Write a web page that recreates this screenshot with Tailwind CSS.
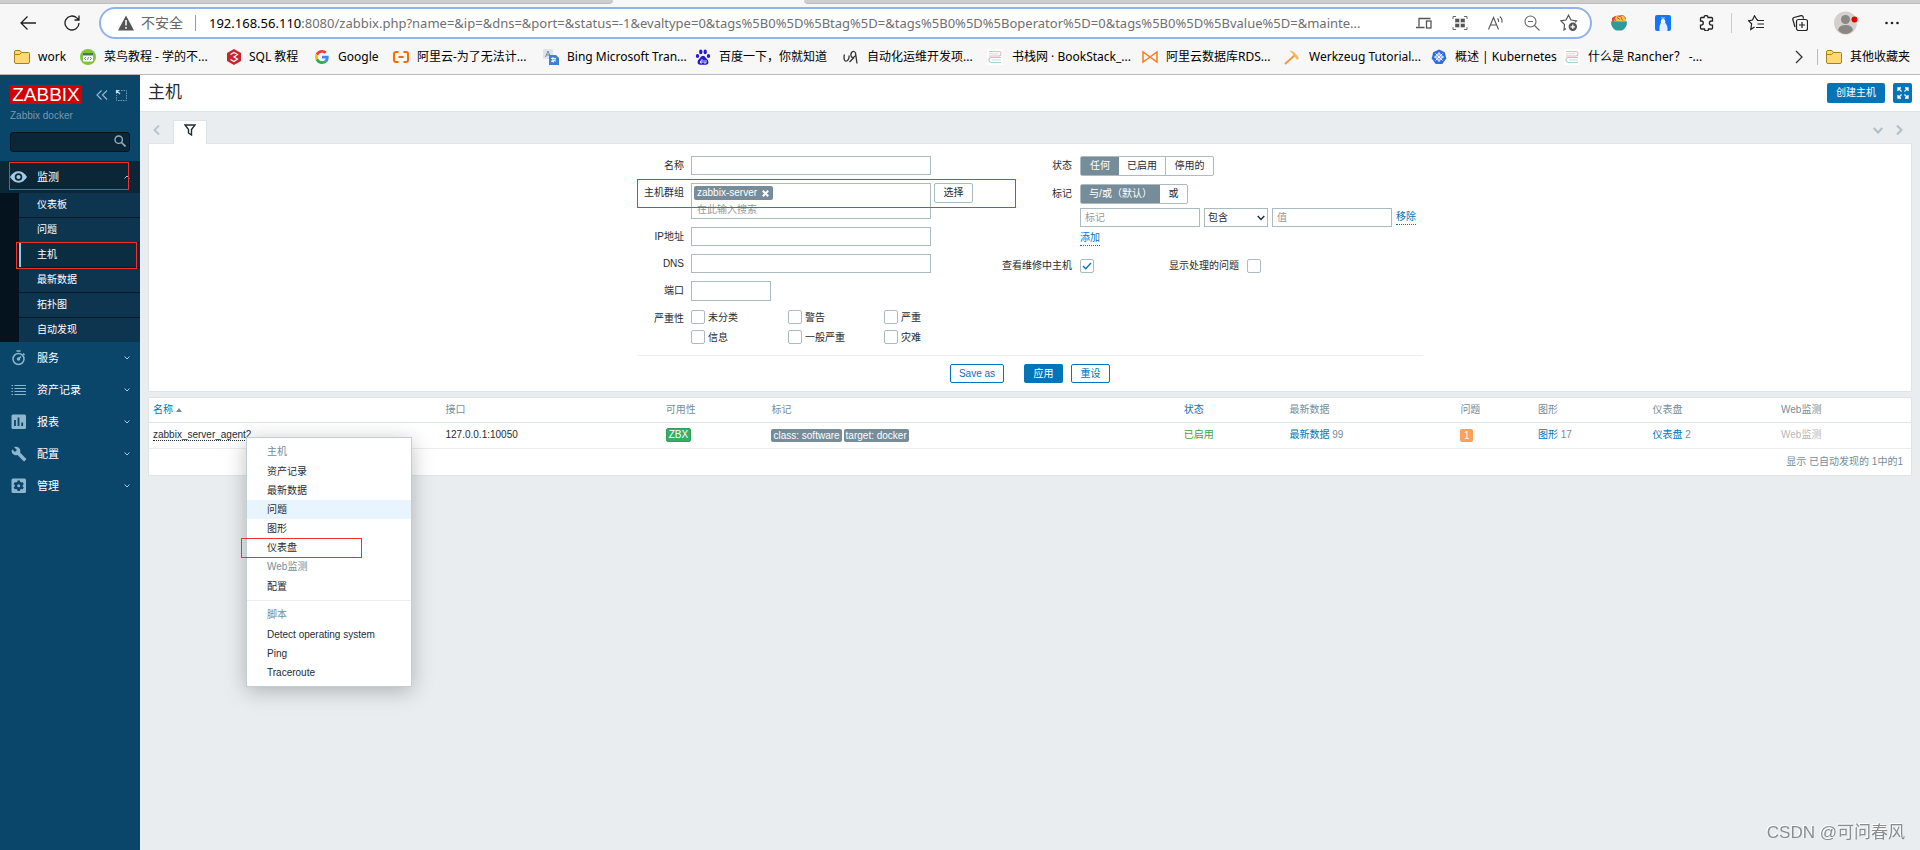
<!DOCTYPE html>
<html lang="zh-CN">
<head>
<meta charset="utf-8">
<title>主机</title>
<script src="https://cdn.jsdelivr.net/npm/@tailwindcss/browser@4"></script>
</head>
<body class="min-h-screen flex flex-col bg-[#e9edf0] text-[#1f2c33] font-['Liberation_Sans','Noto_Sans_CJK_SC',sans-serif] text-[10px] leading-[14px]">

<!-- Browser chrome -->
<header class="bg-[#f7f7f7] border-b border-[#b8b8b8] font-['Noto_Sans','Noto_Sans_CJK_SC',sans-serif] text-black">
  <div class="flex h-1">
    <div class="w-[613px] bg-[#cdcdcd] border-b border-[#bdbdbd] rounded-br"></div>
    <div class="w-[191px]"></div>
    <div class="flex-1 bg-[#cdcdcd] border-b border-[#bdbdbd] rounded-bl"></div>
  </div>
  <div class="flex items-center h-[38px] px-5">
    <button aria-label="返回" class="w-4 h-4"><svg viewBox="0 0 16 16" class="w-4 h-4" fill="none" stroke="#222" stroke-width="1.3"><path d="M16 8H1M7.500 1.500L1 8l6.500 6.500"/></svg></button>
    <button aria-label="刷新" class="w-4 h-4 ml-7"><svg viewBox="0 0 16 16" class="w-4 h-4" fill="none" stroke="#222" stroke-width="1.3"><path d="M15 8a7 7 0 1 1-2.200-5.100L15 5M15 .5V5h-4.500"/></svg></button>
    <div class="ml-[19px] flex-1 h-8 flex items-center rounded-full border-2 border-[#8fb3ec] bg-white pl-[17px] pr-3">
      <svg viewBox="0 0 16 16" class="w-4 h-4" fill="#555"><path d="M8 .5L16 15.500H0z"/><path d="M8 5v5.500M8 12v1.700" stroke="#fff" stroke-width="1.500"/></svg>
      <span class="ml-[7px] text-sm text-[#666] whitespace-nowrap">不安全</span>
      <span class="ml-3 w-px h-4 bg-[#999]"></span>
      <span class="ml-[13px] text-[13px] whitespace-nowrap text-[#707070]"><span class="text-black">192.168.56.110</span>:8080/zabbix.php?name=&amp;ip=&amp;dns=&amp;port=&amp;status=-1&amp;evaltype=0&amp;tags%5B0%5D%5Btag%5D=&amp;tags%5B0%5D%5Boperator%5D=0&amp;tags%5B0%5D%5Bvalue%5D=&amp;mainte...</span>
      <div class="ml-auto flex items-center gap-5 shrink-0">
        <svg viewBox="0 0 16 16" class="w-4 h-4" fill="none" stroke="#555" stroke-width="1.300"><path d="M14.500 3.500H3v8M0 12.500h8.500"/><rect x="10.500" y="6" width="4.500" height="7"/></svg>
        <svg viewBox="0 0 16 16" class="w-4 h-4" fill="none" stroke="#666"><path d="M1 4V1.500h3M12 1.500h3V4M1 12v2.500h3M12 14.500h3V12"/><path d="M3 3.500h4.500v4H3zM8.500 3.500H13v4H8.500zM3 8.500h4.500v4H3zM8.500 8.500H13v4H8.500z" fill="#555" stroke="#fff" stroke-width=".4"/></svg>
        <svg viewBox="0 0 16 16" class="w-4 h-4" fill="none" stroke="#555" stroke-width="1.100"><path d="M.5 14.500L5.500 2.500l5 12M2.500 10h6M9.500 3.500q1.500 1.500 1 3.500M11.800 1.500q3 2.500 2 6"/></svg>
        <svg viewBox="0 0 16 16" class="w-4 h-4" fill="none" stroke="#666" stroke-width="1.100"><circle cx="6.500" cy="6.500" r="5.500"/><path d="M10.500 10.500L15.500 15.500M4 6.500h5"/></svg>
        <svg viewBox="0 0 18 18" class="w-[18px] h-[18px]" fill="none" stroke="#555" stroke-width="1.200"><path d="M6 14.500l-2 1.500 .5-5.500L.8 6.800 6 6 8.500 1.200 11 6l5.500 .8-1.500 1.500"/><circle cx="12.800" cy="12.800" r="4.200" fill="#555" stroke="none"/><path d="M12.800 10.500v4.600M10.500 12.800h4.600" stroke="#fff"/></svg>
      </div>
    </div>
    <svg viewBox="0 0 16 16" class="ml-[19px] w-4 h-4"><path d="M1 7l0-4 3-2 8-1 3 3v4z" fill="#e0483c"/><path d="M3 6L5 1l4 1 3-1.500 3 4V7H4z" fill="#f7c843"/><path d="M6 2.500l3 2M10 2l1.500 3.500M3 3l2 3" stroke="#e0483c"/><path d="M0 6.500h16q0 6.500-5 9H5Q0 13 0 6.500z" fill="#2e9b98"/></svg>
    <svg viewBox="0 0 16 16" class="ml-7 w-4 h-4"><rect width="16" height="16" rx="2" fill="#1277ff"/><path d="M4.500 16Q4 10 6.300 7h3.200Q13 10 12.500 16z" fill="#e2efff"/><circle cx="8" cy="6.300" r="2.200" fill="#fff"/><path d="M6.500 2l1.500 1L9.500 2v1.500h-3z" fill="#fff"/></svg>
    <svg viewBox="0 0 16 16" class="ml-7 w-4 h-4" fill="none" stroke="#222" stroke-width="1.300"><path d="M2.500 2.500H5a2 2 0 0 1 4 0h3.500q1 0 1 1V6H12.500a2.100 2.100 0 0 0 0 4.200h1V13q0 1-1 1H9.500a2 2 0 0 1-4 0h-3q-1 0-1-1v-2.800h.7a2.100 2.100 0 0 0 0-4.200h-.7V3.500q0-1 1-1z"/></svg>
    <span class="ml-4 w-px h-5 bg-[#ccc]"></span>
    <svg viewBox="0 0 16 16" class="ml-4 w-4 h-4" fill="none" stroke="#222" stroke-width="1.200"><path d="M10 4.800L8.800 4.500 6.500.8 4.500 5 .6 5.800l3 3L2.800 14.500 6.500 12M9 5.500h7M9.500 9h6.500M8 12.500h8"/></svg>
    <svg viewBox="0 0 16 16" class="ml-7 w-4 h-4" fill="none" stroke="#222" stroke-width="1.200"><path d="M3 12L.8 4.500Q.5 3 2 2.500L9 .6q1.500-.2 2 1l.5 2"/><rect x="4.500" y="4.500" width="11" height="11" rx="2"/><path d="M10 7v6M7 10h6"/></svg>
    <svg viewBox="0 0 24 24" class="ml-[26px] w-6 h-6"><circle cx="11.500" cy="12" r="11.500" fill="#d3d0cd"/><circle cx="11.500" cy="8.500" r="4.500" fill="#8b8784"/><path d="M4 19q1-5 7.500-5t7.500 5q-3 4-7.500 4T4 19z" fill="#8b8784"/><circle cx="20.500" cy="8.500" r="3" fill="#e60000"/></svg>
    <button aria-label="更多" class="ml-[26px] w-4 h-4"><svg viewBox="0 0 16 16" class="w-4 h-4" fill="#222"><circle cx="2.500" cy="8" r="1.300"/><circle cx="8" cy="8" r="1.300"/><circle cx="13.500" cy="8" r="1.300"/></svg></button>
  </div>
  <nav class="flex items-center h-8 pb-[3px] pl-[14px] pr-[10px] text-xs whitespace-nowrap">
    <a href="#" class="flex items-center gap-2 w-[66px] shrink-0"><svg viewBox="0 0 16 16" class="w-4 h-4 shrink-0"><path d="M.5 3Q.5 1.500 2 1.500h4l1.500 2h7q1 0 1 1V13q0 1.500-1.500 1.500H2Q.5 14.500.5 13z" fill="#ffd976" stroke="#a8811f"/><path d="M.5 5.500h5l2-2" fill="none" stroke="#a8811f"/></svg>work</a>
    <a href="#" class="flex items-center gap-2 w-[146px] shrink-0"><svg viewBox="0 0 16 16" class="w-4 h-4 shrink-0"><circle cx="8" cy="8" r="8" fill="#84c341"/><rect x="3" y="4" width="10" height="8.500" rx="1" fill="#fff"/><path d="M3 4h10v2.500H3z" fill="#476"/><path d="M6 8L4.500 9.500 6 11M10 8l1.500 1.500L10 11M8.500 8l-1 3" fill="none" stroke="#476" stroke-width=".8"/></svg>菜鸟教程 - 学的不...</a>
    <a href="#" class="flex items-center gap-[7px] w-[89px] shrink-0"><svg viewBox="0 0 16 16" class="w-4 h-4 shrink-0"><path d="M8 0l7 4v8l-7 4-7-4V4z" fill="#c8252f"/><path d="M4.500 5.500L8 3.500l3.500 2L8 8l3.500 2L8 12.500 4.500 10.500" fill="none" stroke="#fff" stroke-width="1.200"/></svg>SQL 教程</a>
    <a href="#" class="flex items-center gap-[9px] w-[78px] shrink-0"><svg viewBox="0 0 48 48" class="w-[14px] h-[14px] shrink-0"><path fill="#ea4335" d="M24 9.500c3.540 0 6.710 1.220 9.210 3.600l6.850-6.850C35.900 2.380 30.470 0 24 0 14.620 0 6.510 5.380 2.560 13.220l7.980 6.190C12.430 13.720 17.740 9.500 24 9.500z"/><path fill="#4285f4" d="M46.980 24.550c0-1.570-.15-3.090-.38-4.550H24v9.020h12.940c-.58 2.960-2.260 5.480-4.780 7.180l7.730 6c4.510-4.180 7.090-10.360 7.090-17.650z"/><path fill="#fbbc05" d="M10.530 28.590c-.48-1.450-.76-2.990-.76-4.590s.27-3.140.76-4.590l-7.980-6.190C.92 16.460 0 20.120 0 24s.92 7.540 2.560 10.780z"/><path fill="#34a853" d="M24 48c6.480 0 11.930-2.130 15.890-5.810l-7.730-6c-2.150 1.450-4.920 2.300-8.160 2.300-6.260 0-11.570-4.220-13.470-9.910l-7.980 6.190C6.510 42.620 14.620 48 24 48z"/></svg>Google</a>
    <a href="#" class="flex items-center gap-2 w-[150px] shrink-0"><svg viewBox="0 0 16 16" class="w-4 h-4 shrink-0" fill="none" stroke="#ff6a00" stroke-width="2"><path d="M5.500 3H3Q1 3 1 5v6q0 2 2 2h2.500M10.500 3H13q2 0 2 2v6q0 2-2 2h-2.500M5.500 8h5"/></svg>阿里云-为了无法计...</a>
    <a href="#" class="flex items-center gap-2 w-[152px] shrink-0"><svg viewBox="0 0 16 16" class="w-4 h-4 shrink-0"><rect width="10" height="10" rx="1" fill="#dce3ea"/><path d="M2.500 8L5 2l2.500 6M3.500 6h3" fill="none" stroke="#6f8aa5"/><path d="M6 6h7l3 3v7H6z" fill="#3f7fd4"/><path d="M8 9.500h5M10 8q-.5 4 .5 5.500M12.500 10q-3 4-4 2.500T13 12" fill="none" stroke="#fff" stroke-width=".9"/></svg>Bing Microsoft Tran...</a>
    <a href="#" class="flex items-center gap-2 w-[148px] shrink-0"><svg viewBox="0 0 16 16" class="w-4 h-4 shrink-0" fill="#2319dc"><ellipse cx="2.500" cy="7" rx="1.700" ry="2.100"/><ellipse cx="5.800" cy="2.900" rx="1.700" ry="2.300"/><ellipse cx="10.200" cy="2.900" rx="1.700" ry="2.300"/><ellipse cx="13.500" cy="7" rx="1.700" ry="2.100"/><path d="M8 6.700q1.500 0 3 2.300l2 2.200q1.500 4-2 4.500H5Q1.500 15.200 3 11.200L5 9Q6.500 6.700 8 6.700z"/><path d="M7 10v4H5.500v-2H7M9 11v3h2v-3" fill="none" stroke="#fff" stroke-width=".8"/></svg>百度一下，你就知道</a>
    <a href="#" class="flex items-center gap-2 w-[144px] shrink-0"><svg viewBox="0 0 16 16" class="w-4 h-4 shrink-0" fill="none" stroke="#333" stroke-width="1.300"><path d="M1.500 5.500q-1 3 0 5.500 1 2 3 .5 2-2 1.500-5M12.500 6.500q-2 3-4 1.500-1.500-2.500.5-5 2.500-1.500 3.500 1l1.500 10.500M11 8.500L6.500 13"/></svg>自动化运维开发项...</a>
    <a href="#" class="flex items-center gap-[9px] w-[155px] shrink-0"><svg viewBox="0 0 16 16" class="w-4 h-4 shrink-0" fill="none" stroke-width="1.200"><rect width="16" height="16" fill="#fff"/><path d="M2 2.500h10q2 0 2 2t-2 2.500H2" stroke="#f0b4bb"/><path d="M2 4.800h9" stroke="#f0b4bb" stroke-width=".7"/><path d="M14 8.500H4q-2 0-2 2.300T4 13.500h10" stroke="#a9cfcd"/><path d="M5 11h9" stroke="#a9cfcd" stroke-width=".7"/></svg>书栈网 · BookStack_...</a>
    <a href="#" class="flex items-center gap-2 w-[142px] shrink-0"><svg viewBox="0 0 16 16" class="w-4 h-4 shrink-0" fill="none" stroke="#ff7a1a" stroke-width="1.500"><path d="M1 3v10l7-5 7-5v10L8 8z"/></svg>阿里云数据库RDS...</a>
    <a href="#" class="flex items-center gap-[9px] w-[147px] shrink-0"><svg viewBox="0 0 16 16" class="w-4 h-4 shrink-0" fill="none"><path d="M1 15L11 6" stroke="#ee9b3a" stroke-width="2"/><path d="M5 1.500q4 0 6 2.500l4 5-2 2-3-4.500Q8 3.500 5 1.500z" fill="#f8b75a"/></svg>Werkzeug Tutorial...</a>
    <a href="#" class="flex items-center gap-2 w-[133px] shrink-0"><svg viewBox="0 0 16 16" class="w-4 h-4 shrink-0"><path d="M8 .5l5.800 2.800 1.500 6.200-4 5.500H4.700l-4-5.500 1.500-6.200z" fill="#326ce5"/><g fill="none" stroke="#fff" stroke-width=".9"><circle cx="8" cy="8" r="3.300"/><path d="M8 3v10M3 8h10M4.500 4.500l7 7M11.500 4.500l-7 7"/></g></svg>概述 | Kubernetes</a>
    <a href="#" class="flex items-center gap-2 shrink-0"><svg viewBox="0 0 16 16" class="w-4 h-4 shrink-0" fill="none" stroke-width="1.200"><rect width="16" height="16" fill="#fff"/><path d="M2 2.500h10q2 0 2 2t-2 2.500H2" stroke="#f0b4bb"/><path d="M2 4.800h9" stroke="#f0b4bb" stroke-width=".7"/><path d="M14 8.500H4q-2 0-2 2.300T4 13.500h10" stroke="#a9cfcd"/><path d="M5 11h9" stroke="#a9cfcd" stroke-width=".7"/></svg>什么是 Rancher？ -...</a>
    <svg viewBox="0 0 8 14" class="ml-auto w-2 h-[14px] shrink-0" fill="none" stroke="#333" stroke-width="1.300"><path d="M1 1l6 6-6 6"/></svg>
    <span class="ml-[14px] w-px h-4 bg-[#bbb] shrink-0"></span>
    <a href="#" class="ml-2 flex items-center gap-2 shrink-0"><svg viewBox="0 0 16 16" class="w-4 h-4 shrink-0"><path d="M.5 3Q.5 1.500 2 1.500h4l1.500 2h7q1 0 1 1V13q0 1.500-1.500 1.500H2Q.5 14.500.5 13z" fill="#ffd976" stroke="#a8811f"/><path d="M.5 5.500h5l2-2" fill="none" stroke="#a8811f"/></svg>其他收藏夹</a>
  </nav>
</header>

<div class="flex flex-1">
  <!-- Sidebar -->
  <aside class="w-[140px] shrink-0 bg-[#0a466a] text-white">
    <div class="px-[10px] pt-[10px]">
      <div class="flex items-center">
        <a href="#" class="bg-[#d40000] w-[72px] h-[19px] text-[19px] leading-[19px] text-center">ZABBIX</a>
        <button aria-label="收起" class="ml-[14px]"><svg viewBox="0 0 12 10" class="w-3 h-[10px]" fill="none" stroke="#8fb6cf" stroke-width="1.200"><path d="M5.500 .5L1 5l4.500 4.500M11 .5L6.500 5 11 9.500"/></svg></button>
        <button aria-label="隐藏" class="ml-[7px]"><svg viewBox="0 0 12 12" class="w-3 h-3" fill="none" stroke="#6f9ab5"><path d="M6 1.500h5.500v10h-10V6" stroke-dasharray="1.500 1"/><path d="M1.500 4.500v-3h3M1.500 1.500L5 5" stroke="#c5deec" stroke-width="1.200"/></svg></button>
      </div>
      <div class="mt-[5px] text-[#7698ae]">Zabbix docker</div>
      <div class="relative mt-[9px]">
        <input aria-label="搜索" type="text" class="block w-full h-5 rounded-[3px] border border-[#031722] bg-[#0a2637] px-2">
        <svg viewBox="0 0 12 12" class="absolute right-1 top-[3px] w-3 h-3" fill="none" stroke="#8fb0c4" stroke-width="1.400"><circle cx="4.700" cy="4.700" r="3.700"/><path d="M7.500 7.500l4 4" stroke-width="1.700"/></svg>
      </div>
    </div>
    <nav class="mt-[9px] text-[11px]">
      <div class="relative">
        <a href="#" class="flex items-center h-8 bg-[#0a2637] px-[10px]">
          <svg viewBox="0 0 18 12" class="w-[17px] h-3"><path d="M0 6q3.500-6 9-6t9 6q-3.500 6-9 6T0 6z" fill="#a5c9e2"/><circle cx="9" cy="6" r="4" fill="#0a2637"/><circle cx="9" cy="6" r="2.200" fill="#a5c9e2"/></svg>
          <span class="ml-[10px]">监测</span>
          <svg viewBox="0 0 6 4" class="ml-auto w-[6px] h-1" fill="none" stroke="#a5c9e2"><path d="M.5 3.500L3 1l2.500 2.500"/></svg>
        </a>
        <div class="absolute left-[9px] top-[1px] w-[120px] h-7 border border-[#f0322f] pointer-events-none"></div>
      </div>
      <div class="pl-[19px] bg-[#04131e] text-[10px]">
        <a href="#" class="flex items-center h-[25px] bg-[#0e3550] border-b border-[#041a29] pl-[18px]">仪表板</a>
        <a href="#" class="flex items-center h-[25px] bg-[#0e3550] border-b border-[#041a29] pl-[18px]">问题</a>
        <div class="relative border-b border-[#041a29]">
          <a href="#" class="flex items-center h-6 bg-[#0b2d41] border-l-2 border-[#84cbf5] pl-4">主机</a>
          <div class="absolute -left-[3px] -top-px w-[121px] h-[27px] border border-[#f0322f] pointer-events-none"></div>
        </div>
        <a href="#" class="flex items-center h-[25px] bg-[#0e3550] border-b border-[#041a29] pl-[18px]">最新数据</a>
        <a href="#" class="flex items-center h-[25px] bg-[#0e3550] border-b border-[#041a29] pl-[18px]">拓扑图</a>
        <a href="#" class="flex items-center h-6 bg-[#0e3550] pl-[18px]">自动发现</a>
      </div>
      <a href="#" class="flex items-center h-8 pl-[11px] pr-[10px]"><svg viewBox="0 0 16 16" class="w-4 h-4" fill="none" stroke="#8fb6cf" stroke-width="1.500"><circle cx="7.500" cy="9" r="5.500"/><path d="M5.500 1h4M12 3.500l1.500 1.500M7.500 9l2.500-2.500"/><circle cx="7.500" cy="9" r="1" fill="#8fb6cf"/></svg><span class="ml-[10px]">服务</span><svg viewBox="0 0 6 4" class="ml-auto w-[6px] h-1" fill="none" stroke="#a5c9e2"><path d="M.5 .5L3 3 5.500 .5"/></svg></a>
      <a href="#" class="flex items-center h-8 pl-[11px] pr-[10px]"><svg viewBox="0 0 16 16" class="w-4 h-4" fill="none" stroke="#8fb6cf"><path d="M.5 3.500H2M.5 6.500H2M.5 9.500H2M.5 12.500H2M3.500 3.500H15M3.500 6.500H15M3.500 9.500H15M3.500 12.500H15"/></svg><span class="ml-[10px]">资产记录</span><svg viewBox="0 0 6 4" class="ml-auto w-[6px] h-1" fill="none" stroke="#a5c9e2"><path d="M.5 .5L3 3 5.500 .5"/></svg></a>
      <a href="#" class="flex items-center h-8 pl-[11px] pr-[10px]"><svg viewBox="0 0 16 16" class="w-4 h-4"><rect x=".5" y=".5" width="14.500" height="14.500" rx="1.500" fill="#8fb6cf"/><path d="M4 6v6M7.500 3.500V12M11.200 8.500V12" stroke="#0a466a" stroke-width="1.800"/></svg><span class="ml-[10px]">报表</span><svg viewBox="0 0 6 4" class="ml-auto w-[6px] h-1" fill="none" stroke="#a5c9e2"><path d="M.5 .5L3 3 5.500 .5"/></svg></a>
      <a href="#" class="flex items-center h-8 pl-[11px] pr-[10px]"><svg viewBox="0 0 24 24" class="w-4 h-4" fill="#8fb6cf"><path d="M22.700 19l-9.100-9.100c.9-2.300.4-5-1.500-6.900-2-2-5-2.400-7.400-1.300L9 6 6 9 1.600 4.700C.4 7.100.9 10.100 2.900 12.100c1.900 1.900 4.600 2.400 6.900 1.500l9.100 9.100c.4.400 1 .4 1.400 0l2.300-2.300c.5-.4.5-1.100.1-1.400z"/></svg><span class="ml-[10px]">配置</span><svg viewBox="0 0 6 4" class="ml-auto w-[6px] h-1" fill="none" stroke="#a5c9e2"><path d="M.5 .5L3 3 5.500 .5"/></svg></a>
      <a href="#" class="flex items-center h-8 pl-[11px] pr-[10px]"><svg viewBox="0 0 16 16" class="w-4 h-4"><rect x=".5" y=".5" width="14.500" height="14.500" rx="1.500" fill="#8fb6cf"/><circle cx="7.700" cy="7.700" r="4" fill="#0a466a"/><path d="M7.700 2.500v10.400M3.200 5.100l9 5.200M12.200 5.100l-9 5.200" stroke="#0a466a" stroke-width="2.600"/><circle cx="7.700" cy="7.700" r="1.500" fill="#8fb6cf"/></svg><span class="ml-[10px]">管理</span><svg viewBox="0 0 6 4" class="ml-auto w-[6px] h-1" fill="none" stroke="#a5c9e2"><path d="M.5 .5L3 3 5.500 .5"/></svg></a>
    </nav>
  </aside>

  <main class="flex-1 min-w-0">
    <div class="flex items-center h-[37px] bg-white border-b border-[#dfe4e7] px-2">
      <h1 class="text-[17px] leading-6">主机</h1>
      <button class="ml-auto w-[58px] h-5 rounded-[2px] bg-[#0275b8] text-white whitespace-nowrap">创建主机</button>
      <button aria-label="全屏" class="ml-2 w-[19px] h-5 rounded-[2px] bg-[#0275b8] flex items-center justify-center"><svg viewBox="0 0 12 12" class="w-3 h-3" fill="none" stroke="#fff" stroke-width="1.300"><path d="M1 4V1h3M8 1h3v3M11 8v3H8M4 11H1V8M1 1l3.500 3.500M11 1L7.500 4.500M11 11L7.500 7.500M1 11l3.500-3.500"/></svg></button>
    </div>

    <div class="px-2 pt-2">
      <!-- Filter tabs -->
      <div class="flex h-6">
        <button aria-label="上一个" class="ml-[5px] w-[7px] h-5"><svg viewBox="0 0 7 10" class="w-[7px] h-[10px]" fill="none" stroke="#b9c5cc" stroke-width="2"><path d="M6 .5L1.500 5 6 9.500"/></svg></button>
        <button aria-label="过滤器" class="relative z-10 ml-[13px] w-[34px] h-6 bg-white border border-b-0 border-[#dfe4e7] flex justify-center pt-[3px]"><svg viewBox="0 0 12 12" class="w-3 h-3" fill="none" stroke="#1f2c33" stroke-width="1.400"><path d="M1 1h10L7.500 5.500v5.500l-3-2V5.500z"/></svg></button>
        <button aria-label="展开" class="ml-auto h-5"><svg viewBox="0 0 10 7" class="w-[10px] h-[7px]" fill="none" stroke="#b0bec5" stroke-width="2"><path d="M.7 1L5 5.500 9.300 1"/></svg></button>
        <button aria-label="下一个" class="ml-[13px] mr-[9px] h-5"><svg viewBox="0 0 7 10" class="w-[7px] h-[10px]" fill="none" stroke="#b0bec5" stroke-width="2"><path d="M1 .5L5.500 5 1 9.500"/></svg></button>
      </div>

      <!-- Filter panel -->
      <form class="-mt-px bg-white border border-[#dfe4e7] pt-3 pb-2">
        <div class="relative w-[786px] mx-auto">
          <div class="flex h-[199px]">
            <div class="w-[363px] flex flex-col gap-2 shrink-0">
              <div class="flex items-center gap-[7px]"><label for="f-name" class="w-[47px] text-right">名称</label><input id="f-name" type="text" class="w-60 h-[19px] border border-[#acbbc2] px-1"></div>
              <div class="flex gap-[7px]">
                <label for="f-group" class="w-[47px] text-right leading-[19px] whitespace-nowrap">主机群组</label>
                <div class="w-60 h-9 border border-[#acbbc2] p-[2px] flex flex-col">
                  <span class="self-start flex items-center h-[14px] bg-[#768d99] text-white rounded-[2px] pl-[3px] pr-1 gap-[5px]">zabbix-server<button type="button" aria-label="移除 zabbix-server"><svg viewBox="0 0 7 7" class="w-[7px] h-[7px]" stroke="#fff" stroke-width="2"><path d="M.8 .8l5.400 5.400M6.200 .8L.8 6.200"/></svg></button></span>
                  <input id="f-group" type="text" placeholder="在此输入搜索" class="w-full h-4 mt-[2px] px-[3px] placeholder:text-[#999]">
                </div>
                <button type="button" class="-ml-1 w-[39px] h-5 shrink-0 border border-[#acbbc2] rounded-[2px]">选择</button>
              </div>
              <div class="flex items-center gap-[7px]"><label for="f-ip" class="w-[47px] text-right">IP地址</label><input id="f-ip" type="text" class="w-60 h-[19px] border border-[#acbbc2] px-1"></div>
              <div class="flex items-center gap-[7px]"><label for="f-dns" class="w-[47px] text-right">DNS</label><input id="f-dns" type="text" class="w-60 h-[19px] border border-[#acbbc2] px-1"></div>
              <div class="flex items-center gap-[7px]"><label for="f-port" class="w-[47px] text-right">端口</label><input id="f-port" type="text" class="w-20 h-5 border border-[#acbbc2] px-1"></div>
              <div class="flex gap-[7px]">
                <span class="w-[47px] text-right leading-5">严重性</span>
                <div class="grid grid-cols-[97px_96px_60px] gap-y-1 whitespace-nowrap">
                  <label class="flex items-center gap-[3px] h-4"><input type="checkbox" class="appearance-none w-[14px] h-[14px] border border-[#acbbc2] rounded-[2px]"><span class="pt-[2px]">未分类</span></label>
                  <label class="flex items-center gap-[3px] h-4"><input type="checkbox" class="appearance-none w-[14px] h-[14px] border border-[#acbbc2] rounded-[2px]"><span class="pt-[2px]">警告</span></label>
                  <label class="flex items-center gap-[3px] h-4"><input type="checkbox" class="appearance-none w-[14px] h-[14px] border border-[#acbbc2] rounded-[2px]"><span class="pt-[2px]">严重</span></label>
                  <label class="flex items-center gap-[3px] h-4"><input type="checkbox" class="appearance-none w-[14px] h-[14px] border border-[#acbbc2] rounded-[2px]"><span class="pt-[2px]">信息</span></label>
                  <label class="flex items-center gap-[3px] h-4"><input type="checkbox" class="appearance-none w-[14px] h-[14px] border border-[#acbbc2] rounded-[2px]"><span class="pt-[2px]">一般严重</span></label>
                  <label class="flex items-center gap-[3px] h-4"><input type="checkbox" class="appearance-none w-[14px] h-[14px] border border-[#acbbc2] rounded-[2px]"><span class="pt-[2px]">灾难</span></label>
                </div>
              </div>
            </div>
            <div class="flex flex-col whitespace-nowrap">
              <div class="flex items-center gap-2 h-5">
                <span class="w-[72px] text-right">状态</span>
                <div class="flex h-5 border border-[#acbbc2] rounded-[2px] overflow-hidden">
                  <button type="button" class="w-[38px] bg-[#768d99] text-white">任何</button>
                  <button type="button" class="w-[47px] border-r border-[#acbbc2]">已启用</button>
                  <button type="button" class="w-[47px]">停用的</button>
                </div>
              </div>
              <div class="flex items-center gap-2 h-5 mt-2">
                <span class="w-[72px] text-right">标记</span>
                <div class="flex h-5 border border-[#acbbc2] rounded-[2px] overflow-hidden">
                  <button type="button" class="w-[79px] bg-[#768d99] text-white">与/或（默认）</button>
                  <button type="button" class="w-[27px]">或</button>
                </div>
              </div>
              <div class="flex items-center gap-1 mt-1 pl-20">
                <input aria-label="标记" type="text" placeholder="标记" class="w-[120px] h-[19px] border border-[#acbbc2] px-1 placeholder:text-[#999]">
                <div class="relative">
                  <select aria-label="运算符" class="block appearance-none w-16 h-[19px] border border-[#acbbc2] bg-white pl-[3px]"><option>包含</option></select>
                  <svg viewBox="0 0 8 6" class="absolute right-[3px] top-[7px] w-2 h-[6px] pointer-events-none" fill="none" stroke="#1f2c33" stroke-width="1.400"><path d="M.7 1L4 4.500 7.300 1"/></svg>
                </div>
                <input aria-label="值" type="text" placeholder="值" class="w-[120px] h-[19px] border border-[#acbbc2] px-1 placeholder:text-[#999]">
                <a href="#" class="text-[#0275b8] border-b border-dotted border-[#0275b8]">移除</a>
              </div>
              <div class="pl-20 mt-1 flex"><a href="#" class="text-[#0275b8] border-b border-dotted border-[#0275b8]">添加</a></div>
              <div class="flex items-center gap-2 mt-[13px]">
                <label for="f-maint" class="w-[72px] text-right">查看维修中主机</label>
                <div class="relative w-[14px] h-[14px]"><input id="f-maint" type="checkbox" checked class="block appearance-none w-[14px] h-[14px] border border-[#acbbc2] rounded-[2px]"><svg viewBox="0 0 10 8" class="absolute left-[2px] top-[3px] w-[10px] h-2 pointer-events-none" fill="none" stroke="#0275b8" stroke-width="1.300"><path d="M1 4l2.800 2.700L9 1"/></svg></div>
                <label for="f-supp" class="ml-[67px] w-[70px] text-right">显示处理的问题</label>
                <input id="f-supp" type="checkbox" class="appearance-none w-[14px] h-[14px] border border-[#acbbc2] rounded-[2px]">
              </div>
            </div>
          </div>
          <div class="border-t border-[#ebeef0] pt-2 flex justify-center">
            <button type="button" class="w-[54px] h-[19px] border border-[#0275b8] text-[#0275b8] rounded-[2px]">Save as</button>
            <button type="button" class="ml-5 w-[39px] h-[19px] bg-[#0275b8] text-white rounded-[2px]">应用</button>
            <button type="button" class="ml-2 w-[39px] h-[19px] border border-[#0275b8] text-[#0275b8] rounded-[2px]">重设</button>
          </div>
          <div class="absolute left-0 top-[23px] w-[379px] h-[29px] border border-[#f0322f] pointer-events-none"></div>
        </div>
      </form>

      <!-- Hosts table -->
      <div class="mt-[5px] bg-white border border-[#dfe4e7]">
        <table class="w-full table-fixed text-left whitespace-nowrap">
          <thead>
            <tr class="h-6 border-b border-[#dfe4e7] text-[#768d99]">
              <th class="w-[16.6%] pl-1 font-normal"><a href="#" class="flex items-center gap-[3px] text-[#0275b8]">名称<svg viewBox="0 0 6 4" class="w-[6px] h-1" fill="#768d99"><path d="M3 0l3 4H0z"/></svg></a></th>
              <th class="w-[12.5%] pl-1 font-normal">接口</th>
              <th class="w-[6%] pl-1 font-normal">可用性</th>
              <th class="w-[23.4%] pl-1 font-normal">标记</th>
              <th class="w-[6%] pl-1 font-normal"><a href="#" class="text-[#0275b8]">状态</a></th>
              <th class="w-[9.7%] pl-1 font-normal">最新数据</th>
              <th class="w-[4.4%] pl-1 font-normal">问题</th>
              <th class="w-[6.5%] pl-1 font-normal">图形</th>
              <th class="w-[7.3%] pl-1 font-normal">仪表盘</th>
              <th class="pl-1 font-normal">Web监测</th>
            </tr>
          </thead>
          <tbody>
            <tr class="h-[26px] border-b border-[#ebeef0]">
              <td class="pl-1">
                <div class="relative">
                  <a href="#" class="border-b border-dotted border-[#1f2c33]">zabbix_server_agent2</a>
                  <!-- Host context menu -->
                  <div class="absolute z-20 left-[93px] top-[9px] w-[166px] bg-white border border-[#c3ced3] shadow-[0_4px_20px_0_rgba(0,0,0,0.25)] pt-1 pb-1">
                    <div class="pl-5 h-[19px] leading-[19px] text-[#768d99]">主机</div>
                    <a href="#" class="block mt-[1px] pl-5 h-[19px] leading-[19px]">资产记录</a>
                    <a href="#" class="block pl-5 h-[19px] leading-[19px]">最新数据</a>
                    <a href="#" class="block pl-5 h-[19px] leading-[19px] bg-[#e8f5ff]">问题</a>
                    <a href="#" class="block pl-5 h-[19px] leading-[19px]">图形</a>
                    <a href="#" class="block pl-5 h-[19px] leading-[19px]">仪表盘</a>
                    <span class="block pl-5 h-5 leading-5 text-[#768d99]">Web监测</span>
                    <a href="#" class="block pl-5 h-[19px] leading-[19px]">配置</a>
                    <div class="mt-1 border-t border-[#ebeef0] pt-1"></div>
                    <div class="pl-5 h-5 leading-5 text-[#768d99]">脚本</div>
                    <a href="#" class="block pl-5 h-[19px] leading-[19px]">Detect operating system</a>
                    <a href="#" class="block pl-5 h-[19px] leading-[19px]">Ping</a>
                    <a href="#" class="block pl-5 h-[19px] leading-[19px]">Traceroute</a>
                    <div class="absolute -left-[6px] top-[100px] w-[121px] h-5 border border-[#f0322f] pointer-events-none"></div>
                  </div>
                </div>
              </td>
              <td class="pl-1">127.0.0.1:10050</td>
              <td class="pl-1"><span class="inline-block h-[14px] leading-3 border border-[#2f9f5e] bg-[#34af67] text-white rounded-[2px] px-[2px]">ZBX</span></td>
              <td class="pl-1"><div class="flex gap-[2px]"><span class="h-[13px] leading-[13px] bg-[#768d99] text-white rounded-[2px] px-[2px]">class: software</span><span class="h-[13px] leading-[13px] bg-[#768d99] text-white rounded-[2px] px-[2px]">target: docker</span></div></td>
              <td class="pl-1"><a href="#" class="text-[#429e47]">已启用</a></td>
              <td class="pl-1 text-[#768d99]"><a href="#" class="text-[#0275b8]">最新数据</a> 99</td>
              <td class="pl-1"><a href="#" class="block w-[13px] h-[13px] leading-[13px] text-center bg-[#ffa059] text-white rounded-[2px]">1</a></td>
              <td class="pl-1 text-[#768d99]"><a href="#" class="text-[#0275b8]">图形</a> 17</td>
              <td class="pl-1 text-[#768d99]"><a href="#" class="text-[#0275b8]">仪表盘</a> 2</td>
              <td class="pl-1 text-[#b5b8ba]">Web监测</td>
            </tr>
          </tbody>
        </table>
        <div class="h-[26px] leading-[26px] pr-2 text-right text-[#768d99]">显示 已自动发现的 1中的1</div>
      </div>
    </div>
  </main>
</div>

<div class="fixed right-[15px] bottom-[5px] text-[17px] leading-6 text-[#8a8d90] [text-shadow:-1px_-1px_0_#fff]">CSDN @可问春风</div>
</body>
</html>
